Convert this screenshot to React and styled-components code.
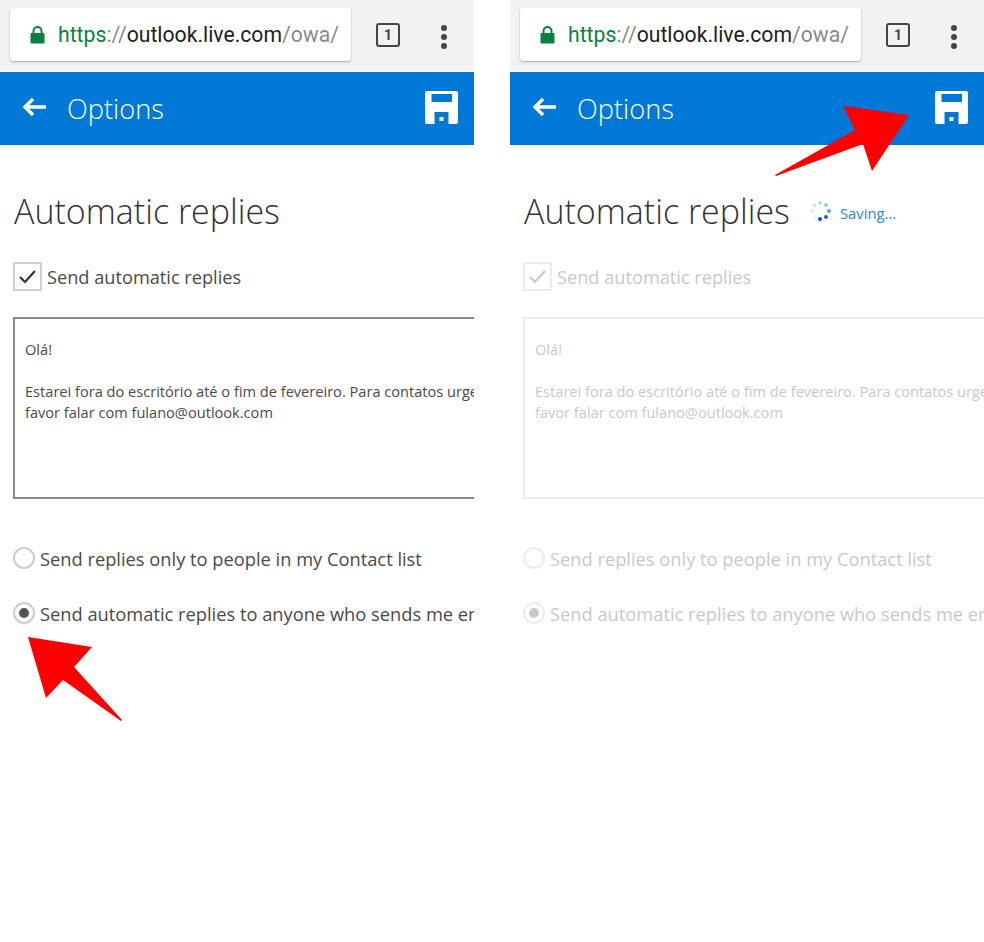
import React from "react";
import styled, { createGlobalStyle } from "styled-components";

const Global = createGlobalStyle`
  html, body { margin: 0; padding: 0; background: #fff; }
  body { font-family: "Open Sans", "Noto Sans", sans-serif; }
`;

const Page = styled.div`
  width: 984px;
  height: 942px;
  display: flex;
  gap: 36px;
  overflow: hidden;
  background: #fff;
`;

const Panel = styled.section`
  position: relative;
  width: 474px;
  flex: none;
  overflow: hidden;
`;

const Chrome = styled.div`
  height: 71px;
  box-sizing: border-box;
  background: #f2f2f2;
  padding: 8px 0 0 10px;
  display: flex;
  align-items: flex-start;
`;

const UrlBox = styled.div`
  width: 341px;
  height: 53px;
  box-sizing: border-box;
  background: #fff;
  border-radius: 3px;
  box-shadow: 0 1px 2px rgba(0, 0, 0, 0.3);
  display: flex;
  align-items: center;
  padding-left: 20px;
  gap: 13px;
  white-space: nowrap;
  font: 400 21.2px "Roboto", sans-serif;
`;

const Https = styled.span`color: #0b8043;`;
const Slashes = styled.span`color: #8a8a8a;`;
const Host = styled.span`color: #212121;`;

const TabCount = styled.div`
  width: 24px;
  height: 24px;
  margin: 15px 0 0 25px;
  box-sizing: border-box;
  border: 2.5px solid #444;
  border-radius: 3px;
  display: flex;
  align-items: center;
  justify-content: center;
  font: 700 14px "Roboto", sans-serif;
  color: #444;
`;

const Dots = styled.div`
  margin: 17px 0 0 41px;
  display: flex;
  flex-direction: column;
  gap: 3px;
`;

const Dot = styled.i`
  width: 6px;
  height: 6px;
  border-radius: 50%;
  background: #444;
`;

const AppBar = styled.header`
  margin-top: 1px;
  height: 73px;
  background: #0078d7;
  display: flex;
  align-items: center;
  padding: 0 16px 3px 22px;
  box-sizing: border-box;
  color: #fff;
`;

const AppTitle = styled.div`
  margin-left: 20px;
  padding-top: 3px;
  flex: 1;
  font-size: 27.2px;
  font-weight: 300;
  line-height: 1;
`;

const Content = styled.main`
  padding: 43px 0 0 13px;
`;

const HeadingRow = styled.div`
  display: flex;
  align-items: center;
  height: 46px;
`;

const Heading = styled.h1`
  margin: 0 0 0 1px;
  font-size: 34px;
  font-weight: 300;
  line-height: 46px;
  color: #333;
  white-space: nowrap;
`;

const Saving = styled.div`
  display: flex;
  align-items: center;
  margin-left: 21px;
  gap: 9px;
  font-size: 14.8px;
  color: #2a87d8;
`;

const SavingLabel = styled.span`
  padding-top: 3px;
`;

const CheckRow = styled.div`
  margin-top: 28px;
  display: flex;
  align-items: center;
  gap: 5px;
`;

const CheckBox = styled.div`
  width: 29px;
  height: 29px;
  flex: none;
  box-sizing: border-box;
  border: 2px solid ${(p) => (p.$off ? "#ececec" : "#d0d0d0")};
  display: flex;
  align-items: center;
  justify-content: center;
`;

const Label = styled.span`
  font-size: 18.3px;
  line-height: 29px;
  white-space: nowrap;
  color: ${(p) => (p.$off ? "#c9c9c9" : "#4a4a4a")};
`;

const CheckLabel = styled(Label)`
  height: 29px;
  font-size: 18.2px;
  line-height: 31px;
`;

const MessageBox = styled.div`
  margin-top: 26px;
  width: 520px;
  height: 182px;
  box-sizing: border-box;
  border: 2px solid ${(p) => (p.$off ? "#eeeeee" : "#8a8a8a")};
  padding: 20px 10px;
  font-size: 14.6px;
  line-height: 21px;
  color: ${(p) => (p.$off ? "#c9c9c9" : "#4a4a4a")};
`;

const Line = styled.div`
  white-space: nowrap;
  min-height: 21px;
`;

const RadioRow = styled.div`
  display: flex;
  align-items: center;
  gap: 5px;
  height: 24px;
  margin-top: ${(p) => p.$gap}px;
`;

const Radio = styled.div`
  width: 22px;
  height: 22px;
  flex: none;
  box-sizing: border-box;
  border-radius: 50%;
  border: 2px solid ${(p) => (p.$off ? "#ececec" : "#cccccc")};
  display: flex;
  align-items: center;
  justify-content: center;
`;

const RadioMark = styled.i`
  width: 10px;
  height: 10px;
  border-radius: 50%;
  background: ${(p) => (p.$off ? "#c9c9c9" : "#555")};
`;

const Arrow = styled.svg`
  position: absolute;
  left: 0;
  top: 0;
  width: 474px;
  height: 942px;
  pointer-events: none;
`;

const Lock = () => (
  <svg width="15" height="18" viewBox="0 0 15 18" style={{ flex: "none" }}>
    <path d="M3.5 8V5a4 4 0 0 1 8 0v3" fill="none" stroke="#0b8043" strokeWidth="2" />
    <rect x="0.5" y="7" width="14" height="10.5" rx="1.2" fill="#0b8043" />
  </svg>
);

const BackArrow = () => (
  <svg width="25" height="20" viewBox="0 0 25 20" style={{ flex: "none" }}>
    <path d="M24 10H4M11 2 3 10l8 8" fill="none" stroke="#fff" strokeWidth="3.4" />
  </svg>
);

const SaveIcon = () => (
  <svg width="33" height="33" viewBox="0 0 33 33" style={{ flex: "none" }}>
    <path
      fillRule="evenodd"
      fill="#fff"
      d="M2 0H31A2 2 0 0 1 33 2V31A2 2 0 0 1 31 33H2A2 2 0 0 1 0 31V2A2 2 0 0 1 2 0ZM6.5 3V11H27V3ZM9.5 21V33H23.5V21ZM14.5 26V30H18.5V26Z"
    />
  </svg>
);

const Check = ({ color }) => (
  <svg width="19" height="15" viewBox="0 0 19 15">
    <path d="M2 8l5 5L17 2" fill="none" stroke={color} strokeWidth="2.2" />
  </svg>
);

const Spinner = () => {
  const dots = [
    [9, 18, "#0a5fc4", 2.1],
    [15, 16, "#0a6fd0", 2],
    [18, 10, "#4c9fe6", 1.9],
    [15, 4, "#93c4ef", 1.9],
    [9, 2, "#b3d6f4", 1.9],
    [3.5, 4.5, "#c9e2f7", 1.9],
    [1.5, 10, "#dcecf9", 1.9],
    [4, 16, "#e8f3fb", 1.9],
  ];
  return (
    <svg width="20" height="20" viewBox="0 0 20 20" style={{ flex: "none" }}>
      {dots.map(([x, y, c, r]) => (
        <circle key={`${x}-${y}`} cx={x} cy={y} r={r} fill={c} />
      ))}
    </svg>
  );
};

const OptionsPanel = ({ saving, arrow }) => (
  <Panel>
    <Chrome>
      <UrlBox>
        <Lock />
        <span>
          <Https>https</Https>
          <Slashes>://</Slashes>
          <Host>outlook.live.com</Host>
          <Slashes>/owa/</Slashes>
        </span>
      </UrlBox>
      <TabCount>1</TabCount>
      <Dots>
        <Dot />
        <Dot />
        <Dot />
      </Dots>
    </Chrome>
    <AppBar>
      <BackArrow />
      <AppTitle>Options</AppTitle>
      <SaveIcon />
    </AppBar>
    <Content>
      <HeadingRow>
        <Heading>Automatic replies</Heading>
        {saving && (
          <Saving>
            <Spinner />
            <SavingLabel>Saving...</SavingLabel>
          </Saving>
        )}
      </HeadingRow>
      <CheckRow>
        <CheckBox $off={saving}>
          <Check color={saving ? "#c9c9c9" : "#333"} />
        </CheckBox>
        <CheckLabel $off={saving}>Send automatic replies</CheckLabel>
      </CheckRow>
      <MessageBox $off={saving}>
        <Line>Olá!</Line>
        <Line />
        <Line>Estarei fora do escritório até o fim de fevereiro. Para contatos urgentes,</Line>
        <Line>favor falar com fulano@outlook.com</Line>
      </MessageBox>
      <RadioRow $gap={47}>
        <Radio $off={saving} />
        <Label $off={saving}>Send replies only to people in my Contact list</Label>
      </RadioRow>
      <RadioRow $gap={31}>
        <Radio $off={saving}>
          <RadioMark $off={saving} />
        </Radio>
        <Label $off={saving}>Send automatic replies to anyone who sends me email</Label>
      </RadioRow>
    </Content>
    <Arrow viewBox="0 0 474 942">
      <polygon points={arrow} fill="#fe0000" />
    </Arrow>
  </Panel>
);

export default function App() {
  return (
    <>
      <Global />
      <Page>
        <OptionsPanel arrow="28,637 92,647 74,667 122,720 121,721 63,680 46,698" />
        <OptionsPanel saving arrow="399,115 333,106 345,130 265,175 266,176 353,144 362,171" />
      </Page>
    </>
  );
}
